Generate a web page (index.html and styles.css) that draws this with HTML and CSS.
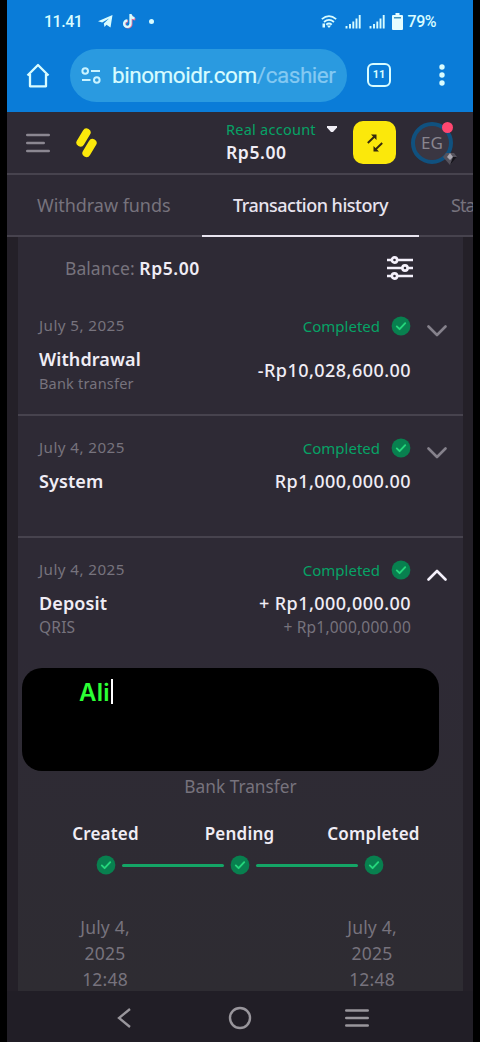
FILE: index.html
```
<!DOCTYPE html>
<html lang="en">
<head>
<meta charset="utf-8">
<meta name="viewport" content="width=device-width, initial-scale=1">
<title>Transaction history</title>
<link rel="stylesheet" href="styles.css">
</head>
<body>
<svg class="defs" width="0" height="0" aria-hidden="true">
  <symbol id="check" viewBox="0 0 20 20"><circle cx="10" cy="10" r="9.4" fill="#08804f"/><path d="M5.8 10.4l2.8 2.8 5.6-6" fill="none" stroke="#25d67c" stroke-width="1.9" stroke-linecap="round" stroke-linejoin="round"/></symbol>
  <symbol id="chevron" viewBox="0 0 20 12"><path d="M1.5 1.5L10 10l8.500-8.500" fill="none" stroke="currentColor" stroke-width="2.600" stroke-linecap="round" stroke-linejoin="round"/></symbol>
  <symbol id="signal" viewBox="0 0 16 14"><path d="M1.500 11v2.500M5 9v4.500M8.300 6.500v7M11.500 3.500v10M14.700 0v13.500" stroke="#d8fcff" stroke-width="1.900"/></symbol>
</svg>
<div class="phone">
  <header class="browser">
    <div class="status">
      <span class="clock">11.41</span>
      <svg class="telegram" width="15" height="13" viewBox="0 0 15 13"><path d="M0 6.200L14.500 0l-2 12.500-4-2.800-2 2.300-.7-3.600L11 3.500 4.200 7.600z" fill="#d8fcff"/></svg>
      <svg class="tiktok" width="14" height="15" viewBox="0 0 14 15"><path d="M8.700 1v8.700a3.200 3.200 0 1 1-3.200-3.200M8.700 1c.3 2.200 1.800 3.500 4 3.700" fill="none" stroke="#ef6d93" stroke-width="2.400" transform="translate(.6 .5)"/><path d="M8.500 0v9.700a3.200 3.200 0 1 1-3.200-3.200M8.500 .5c.3 2.200 1.800 3.500 4 3.700" fill="none" stroke="#d8fcff" stroke-width="2.300"/></svg>
      <i class="dot"></i>
      <span class="grow"></span>
      <svg class="wifi" width="16" height="13" viewBox="0 0 16 13"><path d="M.8 4.200Q8-2 15.200 4.200M3 7Q8 2.600 13 7M5.200 9.700Q8 7.300 10.800 9.700" fill="none" stroke="#d8fcff" stroke-width="1.700"/><path d="M8 13L5.800 10.500h4.400zM1.500 8.500h2.500v4H1.500z" fill="#d8fcff"/></svg>
      <svg class="sig" width="16" height="14"><use href="#signal"/></svg>
      <svg class="sig" width="16" height="14"><use href="#signal"/></svg>
      <svg class="battery" width="11" height="17" viewBox="0 0 11 17"><path d="M3.500 0h4v2H10q1 0 1 1v13q0 1-1 1H1q-1 0-1-1V3q0-1 1-1h2.500z" fill="#e6fdff"/><path d="M2 4h7v1.500H2z" fill="#4195bc"/></svg>
      <span class="pct">79%</span>
    </div>
    <div class="toolbar">
      <svg class="home" width="24" height="25" viewBox="0 0 24 25"><path d="M1.500 12.500L12 2l10.500 10.500M4 11v12.300h16V11" fill="none" stroke="#d8fcff" stroke-width="2.300" stroke-linejoin="round"/></svg>
      <div class="url">
        <svg width="20" height="17" viewBox="0 0 20 17" fill="none" stroke="#c9f3ff" stroke-width="2"><circle cx="4.200" cy="4" r="2.800"/><path d="M10 4h9M1 13h8.500"/><circle cx="15.800" cy="13" r="2.800"/></svg>
        <span class="address">binomoidr.com<span class="path">/cashier</span></span>
      </div>
      <div class="count">11</div>
      <svg class="more" width="6" height="22" viewBox="0 0 6 22" fill="#d8fcff"><circle cx="3" cy="3" r="2.700"/><circle cx="3" cy="11" r="2.700"/><circle cx="3" cy="19" r="2.700"/></svg>
    </div>
  </header>

  <div class="appbar">
    <svg class="menu" width="24" height="20" viewBox="0 0 24 20"><path d="M1.200 2h21.600M1.200 10h16.600M1.200 18h21.600" stroke="#8b8791" stroke-width="2.400" stroke-linecap="round"/></svg>
    <svg class="logo" width="22" height="30" viewBox="0 0 22 30"><path d="M10.500 4.500L4.500 14.500M16.500 15L10.500 25" stroke="#fbe80b" stroke-width="8.200" stroke-linecap="round"/></svg>
    <div class="account">
      <div class="kind">Real account <svg width="10" height="6" viewBox="0 0 10 6"><path d="M0 0h10v1.500L6 6H4L0 1.500z" fill="#f0edf5"/></svg></div>
      <div class="sum">Rp5.00</div>
    </div>
    <div class="swap"><svg width="18" height="20" viewBox="0 0 18 20" fill="none" stroke="#35290f" stroke-width="1.900"><path d="M1.800 10L9 3M16.200 10L9 17"/><path d="M5 1.500h5.500V7zM7.500 13v5.500H13z" fill="#35290f" stroke="none"/></svg></div>
    <div class="avatar">EG<i class="alert"></i>
      <svg class="gem" width="14" height="12" viewBox="0 0 14 12"><path d="M3 0h8l3 4-7 8-7-8z" fill="#55525c"/><path d="M7 0l3 4-3 3-3-3z" fill="#aaa7b0"/><path d="M10 4h4l-7 8z" fill="#15131a"/></svg>
    </div>
  </div>

  <nav class="tabs">
    <span class="tab first">Withdraw funds</span>
    <span class="tab active">Transaction history</span>
    <span class="tab last">Sta</span>
  </nav>

  <main class="content">
    <div class="balance">
      <span>Balance: <b>Rp5.00</b></span>
      <svg width="26" height="24" viewBox="0 0 26 24" fill="#2e2a35" stroke="#f4f0fb" stroke-width="2.600"><path d="M0 4h26M0 12h26M0 20h26"/><circle cx="7.500" cy="4" r="2.600"/><circle cx="18" cy="12" r="2.600"/><circle cx="7.500" cy="20" r="2.600"/></svg>
    </div>

    <section class="row">
      <div class="left"><div class="date">July 5, 2025</div><div class="title">Withdrawal</div><div class="sub">Bank transfer</div></div>
      <div class="right"><div class="state">Completed<svg width="20" height="20"><use href="#check"/></svg></div><div class="amount low">-Rp10,028,600.00</div></div>
      <svg class="chev" width="20" height="12"><use href="#chevron"/></svg>
    </section>
    <section class="row">
      <div class="left"><div class="date">July 4, 2025</div><div class="title">System</div></div>
      <div class="right"><div class="state">Completed<svg width="20" height="20"><use href="#check"/></svg></div><div class="amount">Rp1,000,000.00</div></div>
      <svg class="chev" width="20" height="12"><use href="#chevron"/></svg>
    </section>
    <section class="row open">
      <div class="left"><div class="date">July 4, 2025</div><div class="title">Deposit</div><div class="sub qris">QRIS</div></div>
      <div class="right"><div class="state">Completed<svg width="20" height="20"><use href="#check"/></svg></div><div class="amount">+ Rp1,000,000.00</div><div class="sub total">+ Rp1,000,000.00</div></div>
      <svg class="chev up" width="20" height="12"><use href="#chevron"/></svg>
    </section>

    <div class="note"><span>Ali</span><i></i></div>
    <div class="method">Bank Transfer</div>
    <div class="steps">
      <div class="step"><b>Created</b><svg width="20" height="20"><use href="#check"/></svg></div>
      <div class="bar"></div>
      <div class="step"><b>Pending</b><svg width="20" height="20"><use href="#check"/></svg></div>
      <div class="bar"></div>
      <div class="step"><b>Completed</b><svg width="20" height="20"><use href="#check"/></svg></div>
    </div>
    <div class="times">
      <div>July 4,<br>2025<br>12:48</div>
      <div>July 4,<br>2025<br>12:48</div>
    </div>
  </main>

  <footer class="keys">
    <svg width="14" height="20" viewBox="0 0 14 20"><path d="M13 1L2 10l11 9" fill="none" stroke="#99969c" stroke-width="2.300"/></svg>
    <svg width="24" height="24" viewBox="0 0 24 24"><circle cx="12" cy="12" r="10" fill="none" stroke="#99969c" stroke-width="2.400"/></svg>
    <svg width="24" height="20" viewBox="0 0 24 20"><path d="M1.300 2.500h21.400M1.300 10h21.400M1.300 17.500h21.400" stroke="#99969c" stroke-width="2.600" stroke-linecap="round"/></svg>
  </footer>
</div>
</body>
</html>
```
FILE: styles.css
```
* { box-sizing: border-box; }
body { margin: 0; background: #000; font-family: "Noto Sans", "Open Sans", sans-serif; color: #f0edf5; white-space: nowrap; }
svg { display: block; flex: none; }
i { display: block; }
.defs { position: absolute; }
.phone { width: 466px; height: 1042px; margin: 0 auto; background: #2e2a35; overflow: hidden; display: flex; flex-direction: column; }

.browser { height: 112px; background: #0a7cd8; font-family: Roboto, sans-serif; color: #d8fcff; flex: none; }
.status { height: 43px; display: flex; align-items: center; padding: 0 37px; font-weight: 500; }
.clock { font-size: 16px; letter-spacing: -0.500px; width: 54px; }
.tiktok { margin-left: 9px; }
.dot { width: 5px; height: 5px; border-radius: 50%; background: #d8fcff; margin-left: 13px; }
.grow { flex: 1; }
.sig { margin-left: 8px; }
.battery { margin-left: 7px; }
.pct { font-size: 16px; margin-left: 5px; letter-spacing: -0.500px; }
.toolbar { display: flex; align-items: center; height: 64px; padding-left: 19px; }
.url { margin-left: 20px; width: 277px; height: 53px; border-radius: 27px; background: #2a9ae0; display: flex; align-items: center; padding-left: 11px; gap: 11px; }
.address { font-size: 22.500px; letter-spacing: -0.450px; -webkit-text-stroke: .2px; }
.path { color: #84c9f2; }
.count { width: 24px; height: 24px; margin-left: 20px; border: 2.500px solid #d8fcff; border-radius: 6px; font-size: 11px; line-height: 19px; font-weight: 700; text-align: center; }
.more { margin-left: 48px; }

.appbar { height: 63px; border-bottom: 2px solid #47434e; display: flex; align-items: center; padding-left: 19px; flex: none; }
.logo { margin-left: 26px; }
.account { margin-left: 128px; width: 127px; margin-top: -4px; }
.kind { display: flex; align-items: center; gap: 11px; color: #06a366; font-size: 14.500px; letter-spacing: .25px; line-height: 22px; }
.sum { font-size: 17.500px; letter-spacing: .6px; line-height: 24px; font-weight: 600; }
.swap { width: 43px; height: 43px; border-radius: 10px; background: #fbe80b; display: flex; align-items: center; justify-content: center; }
.avatar { width: 42px; height: 42px; margin-left: 15px; border: 4px solid #10517f; border-radius: 50%; background: #3a3642; color: #89858f; font-size: 17px; line-height: 34px; text-align: center; position: relative; }
.alert { position: absolute; top: -4px; right: -4px; width: 11px; height: 11px; border-radius: 50%; background: #ff4770; }
.gem { position: absolute; right: -8px; bottom: -5px; }

.tabs { height: 62px; border-bottom: 2px solid #47434e; display: flex; font-size: 18px; line-height: 61px; color: #77737d; flex: none; }
.tab { height: 62px; flex: none; }
.first { width: 195px; padding-left: 30px; letter-spacing: -.050px; }
.active { width: 217px; text-align: center; color: #e8e4ef; font-weight: 500; letter-spacing: -.5px; border-bottom: 2px solid #e8e4ef; }
.last { padding-left: 32px; letter-spacing: -1px; width: 54px; }

.content { width: 445px; margin: 0 11px; height: 754px; background: linear-gradient(#2e2a35, #2e2a35 55%, #2e2c32); box-shadow: 0 0 0 11px #242028; overflow: hidden; flex: none; clip-path: inset(0 -11px 0 -11px); }
.balance { height: 57px; padding: 4px 50px 0 47px; display: flex; align-items: center; justify-content: space-between; font-size: 17.500px; color: #77737d; }
.balance span { letter-spacing: .05px; }
.balance b { color: #f0edf5; font-weight: 600; letter-spacing: .6px; }
.row { height: 122px; border-bottom: 2px solid #47434e; display: flex; padding: 20px 16px 0 21px; }
.row.open { border: 0; }
.left { flex: 1; }
.date { font-size: 15.200px; letter-spacing: .430px; line-height: 23px; color: #77737d; }
.title { font-size: 18px; letter-spacing: .100px; line-height: 24px; margin-top: 10px; font-weight: 600; }
.sub { font-size: 14.500px; letter-spacing: .200px; line-height: 24px; color: #77737d; }
.qris { font-size: 15.500px; }
.total { font-size: 15.500px; letter-spacing: .200px; }
.right { text-align: right; }
.state { display: flex; justify-content: flex-end; align-items: center; gap: 11px; height: 23px; font-size: 15px; color: #06a366; }
.amount { font-size: 18px; letter-spacing: .450px; line-height: 24px; margin-top: 10px; font-weight: 500; }
.low { margin-top: 21px; }
.chev { margin: 11px 0 0 16px; color: #85818b; }
.up { transform: rotate(180deg); color: #f4f0fb; }

.note { width: 417px; height: 103px; margin: 8px 0 0 4px; border-radius: 20px; background: #000; display: flex; padding: 11px 0 0 57px; }
.note span { color: #2cff35; font-family: Inter, sans-serif; font-size: 24px; letter-spacing: .2px; line-height: 27px; font-weight: 600; }
.note i { width: 2px; height: 25px; background: #fff; margin-left: 1px; }
.method { font-size: 17.300px; line-height: 32px; text-align: center; color: #77737d; }
.steps { display: flex; padding: 18px 0 0 76.500px; }
.step { width: 22px; height: 58px; display: flex; flex-direction: column; align-items: center; gap: 8px; }
.step b { font-size: 17px; letter-spacing: .200px; line-height: 26px; font-weight: 600; }
.bar { width: 102px; height: 3px; background: #14a566; margin: 43px 5px 0; border-radius: 2px; }
.times { display: flex; justify-content: space-between; padding: 35px 60px 0 56px; font-size: 17.500px; letter-spacing: .200px; line-height: 26px; text-align: center; color: #77737d; }
.times div { width: 62px; }
.keys { flex: 1; background: #211e26; display: flex; align-items: center; justify-content: space-between; padding: 2px 104px 0 110px; }
.keys svg:nth-child(2) { margin-left: 4px; }
```
